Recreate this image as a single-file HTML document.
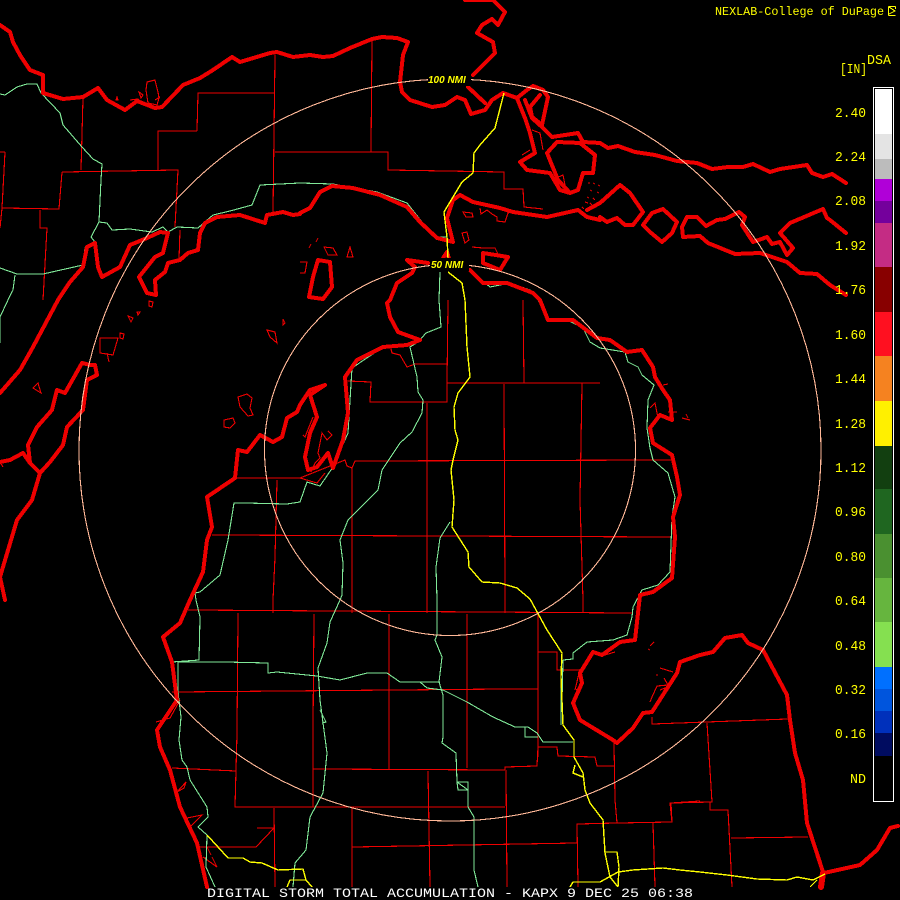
<!DOCTYPE html>
<html><head><meta charset="utf-8"><title>KAPX DSA</title>
<style>
html,body{margin:0;padding:0;background:#000;width:900px;height:900px;overflow:hidden}
svg{display:block}
.t{fill:none;stroke:#ee0000;stroke-width:4;stroke-linejoin:round;stroke-linecap:round;shape-rendering:crispEdges}
.r{fill:none;stroke:#ee0000;stroke-width:1.1;shape-rendering:crispEdges}
.g{fill:none;stroke:#80e898;stroke-width:1.1;shape-rendering:crispEdges}
.y{fill:none;stroke:#ffff00;stroke-width:1.4;shape-rendering:crispEdges}
.c{fill:none;stroke:#ffb898;stroke-width:1.1;shape-rendering:crispEdges}
text{font-family:"Liberation Mono",monospace;fill:#ffff00}
.l{font-size:14px;text-anchor:end}
</style></head><body>
<svg width="900" height="900" viewBox="0 0 900 900" xmlns="http://www.w3.org/2000/svg">
<rect width="900" height="900" fill="#000"/>

<!-- thin county lines -->
<g class="r">
<path d="M83 98L81 170M275 55L273 213M197 131L198 93L274 93M158 170L158 131L197 131M62 172L178 170L175 227M62 172L59 209L2 208M5 152L0 152M5 152L2 208L0 228M40 210L40 228L47 228L43 300M275 152L388 152L388 170L504 172L504 189L523 189L524 207L543 209M372 39L371 152M180 230L179 260"/>
<path d="M448 300L447 383L447 402L370 402L371 382L348 381M447 364L415 364L407 367L400 355L392 353L391 349M447 383L600 383M523 300L524 383M504 384L505 600M582 383L580 500L583 600M427 403L427 600M300 478L345 460L347 466L352 468L355 461L672 460M352 468L352 600M212 535L672 537M237 478L300 478M277 480L275 557L273 600M600 613L633 613"/>
<path d="M188 610L633 613M273 600L273 613M238 613L237 733L235 807L505 807M314 614L313 730L313 807M389 614L389 769M172 692L507 689L538 689M313 769L505 770M172 768L236 771M274 808L275 887M257 828L274 828L256 847L200 847M352 600L352 613M352 807L352 887M352 847L577 843M427 600L427 613M467 614L467 768M505 600L505 613M583 600L583 613"/>
<path d="M538 614L538 757M538 652L557 652L557 670L580 670M505 770L505 767L537 766L538 747L557 747L558 756L595 757L597 766L614 766M614 743L615 800L617 823L577 824L578 887M428 771L430 887M506 770L507 887M653 823L655 887M617 823L672 822L671 803L700 801M652 717L652 724L788 719M707 723L712 802L670 803L672 822M710 802L710 810L728 810L732 887M731 838L808 837"/>
<!-- islands & shore details -->
<path d="M147 82L155 80L158 92L159 98L157 105L148 103L146 90ZM139 92L143 95L141 98ZM130 100L138 99L141 103M117 97L118 100L116 100ZM155 100L160 97"/>
<path d="M238 397L247 394L252 398L250 408L253 415L248 416L240 407ZM224 420L233 418L235 423L230 428L224 427ZM267 330L275 332L277 343L270 337ZM283 319L285 323L283 325ZM100 338L118 338L113 355L100 353ZM120 333L124 334L123 339L120 338ZM128 316L133 318L131 322ZM149 301L153 302L152 307L149 306ZM137 312L140 312L138 315ZM33 388L38 383L41 393ZM107 353L109 362M0 462L3 467"/>
<path d="M462 233L467 232L469 240L465 243ZM472 247L483 248L495 248L498 254M324 247L333 248L337 255L328 255ZM350 247L353 257L347 257ZM300 262L307 262L305 273L300 273M318 238L316 242M311 244L309 248"/>
<path d="M588 183L590 183M593 183L595 184M598 185L600 186M590 190L592 191M597 192L599 193M587 197L589 198M593 198L595 200M585 202L588 203M590 203L592 205M582 207L584 209M595 205L600 203"/>
<path d="M463 212L472 213L473 217L466 217ZM480 208L481 214L487 210L492 214L497 217L497 221L505 222L508 213L515 211L520 214"/>
<path d="M532 130L540 133L543 150M556 178L563 175L566 190M522 155L530 150"/>
<path d="M660 668L673 672M664 678L668 685L657 686L652 697L650 702M656 675L658 675M650 646L654 642M648 649L650 650M665 688L660 690M605 655L615 652M580 669L575 690M576 690L583 685"/>
<path d="M328 431L332 435L327 440L322 433L318 453L320 458L315 463L311 472M313 417L305 437L303 435M300 478L310 481L317 483L325 473"/>
<path d="M177 792L186 782L184 788ZM187 818L202 815L190 827M203 857L217 867L212 857M207 847L211 855M180 700L170 718L156 722M650 408L655 403L658 418M668 412L677 412M682 418L690 420M686 414L688 418M663 385L668 384"/>
</g>

<!-- green state/highway borders -->
<g class="g">
<path d="M0 94L5 95L17 87L27 84L37 84L41 93L60 113L63 125L82 147L93 159L102 164L101 180L99 222L107 223L112 230L130 229L152 232L163 227L168 232L177 227L198 228L213 215L230 211L252 205L260 185L300 183L333 184L377 192L407 203L422 222L438 237L447 237"/>
<path d="M99 222L91 237L95 242L85 248L83 265L43 274L17 274L0 268M15 275L13 290L8 300L0 317L0 343"/>
<path d="M440 272L439 300L441 327L426 333L418 342L410 347L417 377L418 392L423 400L422 413L412 432L400 443L382 470L378 490L348 520L340 540L343 563L342 595L340 600L330 622L327 643L318 668L320 700L327 753L323 793L310 817L306 850L295 863L293 887"/>
<path d="M320 710L326 722L322 723"/>
<path d="M418 342L383 347L352 368L350 400L348 433L333 467L320 486L307 482L300 502L287 504L245 503L234 503L228 540L220 575L200 592L195 593L196 600L200 617L199 660L172 662"/>
<path d="M178 662L178 692L181 717L179 740L182 760L187 767L190 780L207 807L208 817L198 827L207 835L206 867L215 887M178 692L172 708"/>
<path d="M178 662L225 662L268 663L268 673L277 672L317 676L340 680L367 673L387 673L400 682L440 682M420 682L427 688L443 690L467 702L493 717L515 727L528 727L537 733L543 742L573 742M525 727L525 737L538 737"/>
<path d="M450 522L440 538L436 567L437 600L437 635L435 640L442 657L439 682L443 695L443 737L442 743L456 753L457 782L468 790L468 807L474 817L474 870L478 887M457 782L468 782L468 790L458 790Z"/>
<path d="M563 660L573 659L573 653L587 642L613 640L627 635L632 617L633 607L642 590L658 585L670 572L672 517L675 497L668 473L653 460L650 448L647 428L648 400L654 385L642 375L638 367L628 362L625 352L600 348L590 342L583 328L567 320L548 320L538 300L530 290L510 283L490 287L470 270"/>
<path d="M561 677L561 725M563 660L562 700"/>
</g>

<!-- thick coastlines -->
<g class="t">
<path d="M0 25L10 32L13 42L20 55L30 70L43 75L43 93L63 99L83 97L98 88L107 100L125 110L137 101L155 108L162 107L183 85L200 78L213 70L232 57L240 62L270 53L277 52L293 57L310 55L323 57L333 56L350 48L372 39L382 37L397 38L408 42L403 55L400 82L402 92L410 100L432 107L445 105L457 97L465 100L471 114L485 110L492 100L503 93L517 98L527 90L533 86L543 90L548 97L542 125L532 117L530 107L540 95"/>
<path d="M465 0L493 0L505 12L498 25L492 19L482 25L477 33L493 42L495 53L473 75M468 87L485 103"/>
<path d="M517 98L525 118L530 133L535 153L520 162L527 170L550 173L560 190L570 193L578 190L583 173L593 173L595 155L580 143L557 142L547 153L558 180L570 193M525 100L532 118L542 127L552 137L578 133L583 142L600 143L608 148L618 146L635 152L655 155L677 161L697 163L712 169L728 167L743 167L753 164L770 172L780 169L807 165L812 173L823 177L832 174L846 183"/>
<path d="M600 203L620 185L630 193L643 212L633 225L625 225L617 218L607 222L600 217M578 210L587 217L600 220M587 210L600 203"/>
<path d="M643 225L652 213L663 209L677 222L672 233L662 242L650 232Z"/>
<path d="M687 217L697 217L706 226L717 220L725 219L739 212L745 217L742 225L753 242L767 237L772 244L780 242L787 255L793 248L780 233L790 223L823 209L827 218L830 220L846 233M687 217L682 227L683 237L700 236L708 243L735 254L760 253L787 262L800 273L817 274L830 285L846 295"/>
<path d="M300 213L310 208L320 192L332 186L353 188L380 195L407 207L420 222L437 238L453 242L447 218L453 200L460 195L473 202L500 208L513 212L547 217L578 210"/>
<path d="M300 214L293 215L283 212L267 215L265 223L240 215L217 217L205 223L200 233L198 250L188 253L180 260L168 263L165 272L155 280L156 295L147 293L139 277L155 257L163 253L168 233L160 232L147 238L130 245L120 267L102 277L98 267L95 243L87 247L83 267L70 282L58 300L33 347L20 370L0 393"/>
<path d="M82 363L90 365L95 365L97 375L87 380L83 410L67 427L63 445L50 462L40 473L32 500L17 520L0 577L5 600M82 363L65 393L57 390L52 410L37 427L28 445L30 463L40 473M0 462L10 460L23 453L30 463"/>
<path d="M235 478L238 450L247 452L260 435L273 442L282 437L287 418L297 412L300 405L310 390L325 385L310 395L317 417L310 433L305 457L308 470L317 467L328 453L333 468L343 440L348 413L345 377L357 360L383 347L407 345L420 340L398 332L390 317L387 303L390 300L397 283L412 273L415 267L407 260L428 263M440 263L447 252L450 262"/>
<path d="M470 270L483 283L507 283L533 293L540 300L548 320L573 320L597 338L610 340L627 352L642 350L653 367L655 377L663 390L670 400L672 420L660 415L650 428L653 443L672 455L677 477L680 495L673 517L675 537L672 578L653 592L640 595L635 640L620 642L602 655L593 652L580 673L582 683L573 703L580 720L613 740L617 743L633 728L643 713L652 712L677 673L680 662L700 655L713 652L725 638L742 635L748 643L763 650L787 695L790 720L795 753L803 780L807 823L823 872"/>
<path d="M824 873L860 865L877 850L890 828L898 826"/>
<path d="M235 478L207 497L212 527L207 540L203 572L190 600L180 623L163 637L172 662L177 700L157 730L160 747L170 770L180 807L197 843L207 887"/>
<path d="M318 260L330 262L332 287L323 299L309 297L313 277Z"/>
<path d="M483 253L508 257L500 270L483 263Z"/>
<path d="M823 873L821 887" stroke-width="6"/>
</g>

<!-- yellow line -->
<g class="y">
<path d="M504 93L495 128L480 145L474 153L473 173L462 182L444 212L447 237L448 258M448 272L462 283L465 300L467 347L470 377L458 393L454 407L455 430L458 440L453 460L451 470L454 500L452 527L468 552L469 567L482 582L500 583L517 588L530 599L547 630L562 653L561 677L563 725L574 740L574 757L583 773L585 790L590 803L603 820L605 853L610 877L618 887"/>
<path d="M575 765L573 773L583 777M605 852L617 852L619 867L618 887"/>
<path d="M207 835L218 847L228 858L243 858L250 862L262 863L278 870L303 869L306 880L290 880L287 887M306 880L312 887"/>
<path d="M570 887L573 882L600 882L618 872L633 870L663 868L680 870L700 872L727 875L757 879L787 880L797 877L813 880L825 874M817 880L810 887"/>
</g>

<!-- range rings -->
<circle class="c" cx="450" cy="450" r="371"/>
<circle class="c" cx="450" cy="450" r="185.5"/>
<rect x="428" y="73" width="43" height="13" fill="#000"/>
<rect x="430" y="258" width="39" height="13" fill="#000"/>
<text x="428" y="83" style="font-family:'Liberation Sans',sans-serif;font-size:10px;font-weight:bold;font-style:italic">100 NMI</text>
<text x="431" y="268" style="font-family:'Liberation Sans',sans-serif;font-size:10px;font-weight:bold;font-style:italic">50 NMI</text>

<!-- colour bar -->
<rect x="873.5" y="87.5" width="20" height="714" fill="#000" stroke="#fff" stroke-width="1" shape-rendering="crispEdges"/>
<g shape-rendering="crispEdges">
<rect x="875" y="89" width="17" height="45" fill="#fff"/>
<rect x="875" y="134" width="17" height="25" fill="#e4e4e4"/>
<rect x="875" y="159" width="17" height="20" fill="#bcbcbc"/>
<rect x="875" y="179" width="17" height="22" fill="#b000d8"/>
<rect x="875" y="201" width="17" height="22" fill="#74009c"/>
<rect x="875" y="223" width="17" height="44" fill="#c42c84"/>
<rect x="875" y="267" width="17" height="45" fill="#880000"/>
<rect x="875" y="312" width="17" height="44" fill="#ff1020"/>
<rect x="875" y="356" width="17" height="45" fill="#f58220"/>
<rect x="875" y="401" width="17" height="45" fill="#fff000"/>
<rect x="875" y="446" width="17" height="43" fill="#123f10"/>
<rect x="875" y="489" width="17" height="45" fill="#1f6620"/>
<rect x="875" y="534" width="17" height="44" fill="#4a9030"/>
<rect x="875" y="578" width="17" height="44" fill="#66b53e"/>
<rect x="875" y="622" width="17" height="45" fill="#85e050"/>
<rect x="875" y="667" width="17" height="22" fill="#0070ff"/>
<rect x="875" y="689" width="17" height="22" fill="#0055dd"/>
<rect x="875" y="711" width="17" height="22" fill="#0030bb"/>
<rect x="875" y="733" width="17" height="23" fill="#000c60"/>
</g>

<!-- labels -->
<g>
<text class="l" x="866" y="117" textLength="31" lengthAdjust="spacingAndGlyphs">2.40</text>
<text class="l" x="866" y="161" textLength="31" lengthAdjust="spacingAndGlyphs">2.24</text>
<text class="l" x="866" y="205" textLength="31" lengthAdjust="spacingAndGlyphs">2.08</text>
<text class="l" x="866" y="250" textLength="31" lengthAdjust="spacingAndGlyphs">1.92</text>
<text class="l" x="866" y="294" textLength="31" lengthAdjust="spacingAndGlyphs">1.76</text>
<text class="l" x="866" y="339" textLength="31" lengthAdjust="spacingAndGlyphs">1.60</text>
<text class="l" x="866" y="383" textLength="31" lengthAdjust="spacingAndGlyphs">1.44</text>
<text class="l" x="866" y="428" textLength="31" lengthAdjust="spacingAndGlyphs">1.28</text>
<text class="l" x="866" y="472" textLength="31" lengthAdjust="spacingAndGlyphs">1.12</text>
<text class="l" x="866" y="516" textLength="31" lengthAdjust="spacingAndGlyphs">0.96</text>
<text class="l" x="866" y="561" textLength="31" lengthAdjust="spacingAndGlyphs">0.80</text>
<text class="l" x="866" y="605" textLength="31" lengthAdjust="spacingAndGlyphs">0.64</text>
<text class="l" x="866" y="650" textLength="31" lengthAdjust="spacingAndGlyphs">0.48</text>
<text class="l" x="866" y="694" textLength="31" lengthAdjust="spacingAndGlyphs">0.32</text>
<text class="l" x="866" y="738" textLength="31" lengthAdjust="spacingAndGlyphs">0.16</text>
<text class="l" x="866" y="783" textLength="16" lengthAdjust="spacingAndGlyphs">ND</text>
</g>
<text x="867" y="64" style="font-size:14px" textLength="24" lengthAdjust="spacingAndGlyphs">DSA</text>
<text x="840" y="73" style="font-size:14px" textLength="27" lengthAdjust="spacingAndGlyphs">[IN]</text>
<text x="715" y="15" style="font-size:12px" textLength="169" lengthAdjust="spacingAndGlyphs">NEXLAB-College of DuPage</text>
<path d="M888.5 6.5H895.5M888.5 6.5V15.5M888.5 15.5H895.5M889 7L895 11L889 14M895.5 6.5V9" fill="none" stroke="#ffff00" stroke-width="1" shape-rendering="crispEdges"/>
<text x="207" y="897" style="font-size:13px;fill:#fff" textLength="486" lengthAdjust="spacingAndGlyphs">DIGITAL STORM TOTAL ACCUMULATION - KAPX 9 DEC 25 06:38</text>
</svg>
</body></html>
